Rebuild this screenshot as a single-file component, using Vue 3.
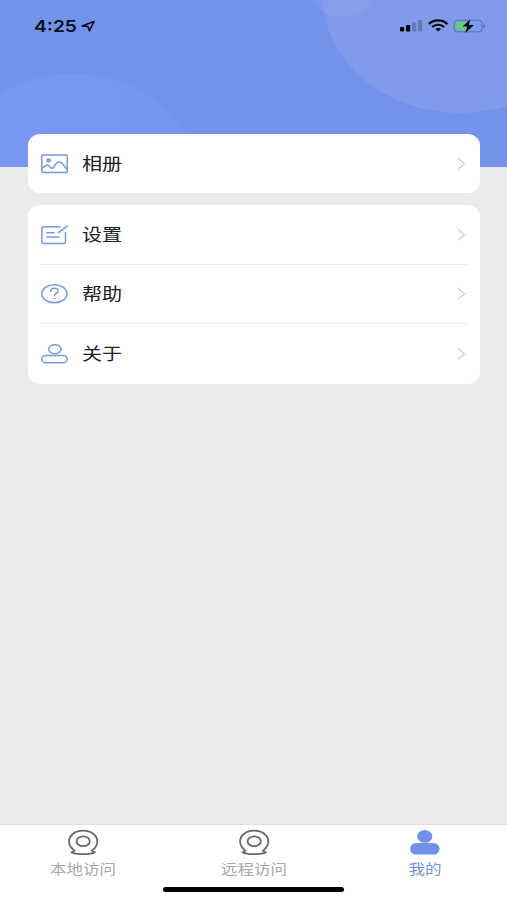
<script setup>
const groups = [
  [{ icon: 'album', label: '相册' }],
  [
    { icon: 'settings', label: '设置' },
    { icon: 'help', label: '帮助' },
    { icon: 'about', label: '关于' },
  ],
]
const tabs = [
  { label: '本地访问', icon: 'camera' },
  { label: '远程访问', icon: 'camera' },
  { label: '我的', icon: 'user', active: true },
]
</script>

<template>
  <div class="screen">
    <header class="hero">
      <svg class="bubbles" width="507" height="167" viewBox="0 0 507 167">
        <defs>
          <linearGradient id="bubble-fade" x1="0" y1="0" x2="1" y2="0">
            <stop offset=".5" stop-color="#7797f2" />
            <stop offset="1" stop-color="#7494ed" />
          </linearGradient>
        </defs>
        <ellipse cx="73" cy="185" rx="129" ry="111" fill="url(#bubble-fade)" />
        <ellipse cx="342" cy="-10.5" rx="32.5" ry="27.5" fill="#7b98ed" />
        <ellipse cx="460" cy="-3" rx="137" ry="116" fill="#a0b1e9" fill-opacity=".3" />
      </svg>
      <div class="status">
        <span class="time">4:25</span>
        <svg class="location" width="15" height="13" viewBox="0 0 15 13">
          <path d="M1.2 5.9 13 1.6 8.4 10.8 7 6.5Z" fill="none" stroke="#0b1020" stroke-width="1.6" stroke-linejoin="round" />
        </svg>
        <svg class="indicators" width="90" height="18" viewBox="0 0 90 18">
          <g fill="#03050c">
            <rect x="1" y="10" width="4.2" height="4.5" rx="1" />
            <rect x="7" y="8" width="4.2" height="6.5" rx="1" />
            <g opacity=".22">
              <rect x="13" y="5.3" width="4.2" height="9.2" rx="1" />
              <rect x="19" y="3" width="4.2" height="11.5" rx="1" />
            </g>
          </g>
          <g fill="none" stroke="#03050c" stroke-width="2.2">
            <path d="M30 7.1C34.5 2.2 43.5 2.2 48.4 7.1" />
            <path d="M33.2 10C36.6 7 41.7 7 45.1 10" />
          </g>
          <path d="M36.3 12.1C38 10.7 40.4 10.7 42.1 12.1L39.2 14.6Z" fill="#03050c" />
          <rect x="55.2" y="3.2" width="27.8" height="11.6" rx="3.4" fill="none" stroke="#3c539c" stroke-opacity=".55" stroke-width="1.1" />
          <path d="M84.3 7.2C86.5 7.6 86.5 10.4 84.3 10.8Z" fill="#3c539c" fill-opacity=".7" />
          <rect x="57" y="4.8" width="12" height="8.4" rx="1.8" fill="#69cb7c" />
          <path d="M71.3 2.2 63.5 9.6H68.2L66 15.9 75 8.1H69.8Z" fill="#03050c" />
        </svg>
      </div>
    </header>

    <main class="groups">
      <section v-for="(group, i) in groups" :key="i" class="card">
        <div v-for="item in group" :key="item.icon" class="row">
          <svg class="row-icon" width="28" height="22" viewBox="0 0 28 22" fill="none" stroke="#7896e8" stroke-width="1.5" stroke-linecap="round" stroke-linejoin="round">
            <template v-if="item.icon === 'album'">
              <rect x="1.8" y="2" width="25.4" height="17.5" rx="1" />
              <ellipse cx="8.6" cy="7.4" rx="1.7" ry="1.4" fill="#9fb3ed" />
              <path d="M2.1 15.5C5.6 12.2 7.9 10.7 10 14.1 11.9 16.9 13.7 14.3 15.4 11.7 17.5 8.5 20.2 8.1 22.5 11L26.9 16.3" />
            </template>
            <template v-else-if="item.icon === 'settings'">
              <path d="M20 2.7H3.4Q1.9 2.7 1.9 4V18.1Q1.9 19.5 3.4 19.5H24Q25.5 19.5 25.5 18.1V8.5M27.2 2.1 18.6 8.7" />
              <path d="M6.6 8.7H14M6.6 13H19" stroke-width="1.5" />
            </template>
            <template v-else-if="item.icon === 'help'">
              <ellipse cx="14.4" cy="10.7" rx="12.6" ry="9" />
              <path d="M10.7 8.3C10.9 4.4 18.1 4.4 18.1 8 18.1 10.2 14.5 10.4 14.5 12.7" />
              <ellipse cx="14.5" cy="15.4" rx=".5" ry=".4" fill="#7896e8" stroke-width=".9" />
            </template>
            <template v-else>
              <ellipse cx="14.8" cy="6.2" rx="6.2" ry="4.5" />
              <rect x="1.8" y="12.5" width="25.4" height="7.3" rx="4.2" ry="3.65" />
            </template>
          </svg>
          <span class="row-label">{{ item.label }}</span>
          <svg class="chevron" width="9" height="14" viewBox="0 0 9 14">
            <path d="M.8 1.3 7.7 6.8 .8 12.3" fill="none" stroke="#d2d2d2" stroke-width="1.4" />
          </svg>
        </div>
      </section>
    </main>

    <footer class="tabbar">
      <nav class="tabs">
        <div v-for="tab in tabs" :key="tab.label" class="tab" :class="{ active: tab.active }">
          <svg width="32" height="28" viewBox="0 0 32 28">
            <g v-if="tab.icon === 'camera'" fill="none" stroke="#686868" stroke-width="1.8" stroke-linejoin="round">
              <path d="M6.8 22C3.8 19.8 2.1 16.8 2.1 13.3 2.1 7.2 8.2 2.6 16.1 2.6S30.3 7.2 30.3 13.3C30.3 16.8 28.6 19.8 25.6 22" />
              <path d="M8.3 22.2 4.6 24.2C8.2 26.8 24.2 26.8 27.8 24.2L24.1 22.2" />
              <ellipse cx="16.2" cy="13.2" rx="6.6" ry="4.9" />
            </g>
            <g v-else fill="#7091e7">
              <ellipse cx="15.8" cy="8.4" rx="7.5" ry="6.4" />
              <rect x="1" y="15" width="29.6" height="11.6" rx="6.2" ry="5.8" />
            </g>
          </svg>
          <span class="tab-label">{{ tab.label }}</span>
        </div>
      </nav>
      <div class="home-indicator"></div>
    </footer>
  </div>
</template>

<style>
body {
  margin: 0;
}
</style>

<style scoped>
.screen {
  display: flex;
  flex-direction: column;
  width: 507px;
  height: 900px;
  overflow: hidden;
  background: #ebebeb;
  font-family: "Liberation Sans", "Noto Sans CJK SC", sans-serif;
}
.hero {
  position: relative;
  flex: none;
  height: 167px;
  background: #7392ea;
}
.bubbles {
  position: absolute;
  inset: 0;
}
.status {
  position: relative;
  display: flex;
  align-items: center;
  height: 52px;
  padding: 0 18px 0 33.5px;
}
.time {
  width: 47px;
  color: #090e1c;
  font: 600 16px/20px Inter, sans-serif;
  transform: scaleX(1.2);
  transform-origin: left;
}
.indicators {
  margin-left: auto;
}
.groups {
  position: relative;
  display: flex;
  flex: 1;
  flex-direction: column;
  gap: 12px;
  margin-top: -33px;
  padding: 0 27px 0 28px;
}
.card {
  display: flex;
  flex-direction: column;
  padding: 0 12px;
  border-radius: 13px / 11px;
  background: #fff;
}
.row {
  display: flex;
  align-items: center;
  box-sizing: border-box;
  height: 59px;
}
.row + .row {
  margin-right: 1px;
  border-top: 1px solid #ececec;
}
.row:last-child {
  height: 60.6px;
}
.row:only-child {
  height: 59.4px;
}
.row-label {
  margin-left: 14px;
  padding-top: 2px;
  color: #202020;
  font-size: 17px;
  line-height: 24px;
  transform: scaleX(1.18);
  transform-origin: left;
}
.chevron {
  margin: 0 2px 0 auto;
}
.row + .row .chevron {
  margin-right: 1px;
}
.tabbar {
  display: flex;
  flex: none;
  flex-direction: column;
  align-items: center;
  box-sizing: border-box;
  height: 76px;
  padding-top: 3px;
  border-top: 1px solid #dedede;
  background: #fff;
}
.tabs {
  display: grid;
  grid-template-columns: repeat(3, 171px);
  justify-content: center;
  width: 507px;
}
.tab {
  display: flex;
  flex-direction: column;
  align-items: center;
  color: #a8a8a8;
}
.tab-label {
  margin-top: 3px;
  font-size: 14px;
  line-height: 20px;
  transform: scaleX(1.18);
}
.tab.active {
  color: #7391e8;
}
.home-indicator {
  width: 181px;
  height: 5px;
  margin-top: 8px;
  border-radius: 3px;
  background: #000;
}
</style>
